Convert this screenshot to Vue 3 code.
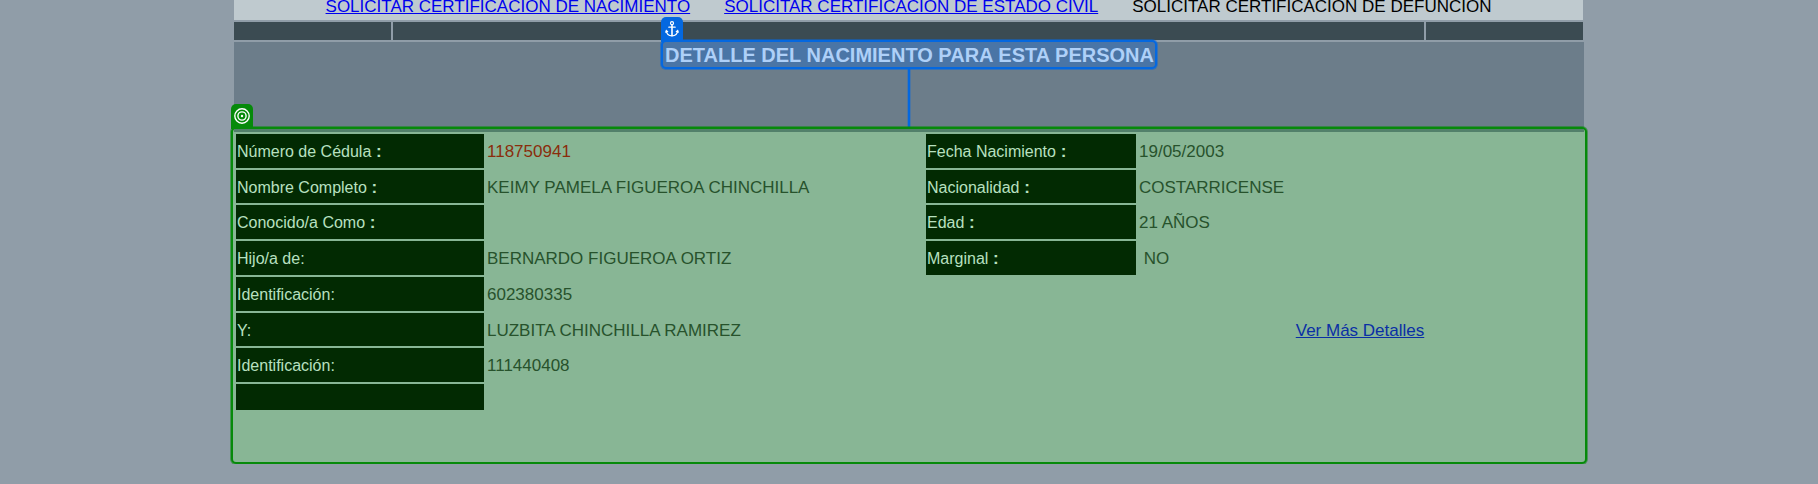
<script setup>
const people = [
  { label: 'Número de Cédula', colon: true, value: '118750941', accent: true, label2: 'Fecha Nacimiento', value2: '19/05/2003' },
  { label: 'Nombre Completo', colon: true, value: 'KEIMY PAMELA FIGUEROA CHINCHILLA', label2: 'Nacionalidad', value2: 'COSTARRICENSE' },
  { label: 'Conocido/a Como', colon: true, value: '', label2: 'Edad', value2: '21 AÑOS' },
  { label: 'Hijo/a de:', value: 'BERNARDO FIGUEROA ORTIZ', label2: 'Marginal', value2: '\u00a0NO' },
  { label: 'Identificación:', value: '602380335' },
  { label: 'Y:', value: 'LUZBITA CHINCHILLA RAMIREZ', link: 'Ver Más Detalles' },
  { label: 'Identificación:', value: '111440408' },
  { label: '', value: '' }
]
</script>

<template>
  <main class="page">
    <nav class="requests">
      <a href="#nacimiento">SOLICITAR CERTIFICACION DE NACIMIENTO</a>
      <a href="#estado-civil">SOLICITAR CERTIFICACION DE ESTADO CIVIL</a>
      <span>SOLICITAR CERTIFICACION DE DEFUNCION</span>
    </nav>
    <div class="bars"><i></i><i></i><i></i></div>
    <header class="band">
      <div class="anchor">
        <span class="tag tag-blue">
          <svg viewBox="0 0 16 16" width="16" height="16" fill="none" stroke="#fff" stroke-linecap="round">
            <circle cx="8" cy="2.2" r="1.5" stroke-width="1.2" />
            <path d="M8 4v10.6" stroke-width="1.6" />
            <path d="M4.800 6.200h6.400" stroke-width="1.200" />
            <path d="M2.300 9.800c.3 3 2.600 5 5.700 5.100 3.100-.1 5.400-2.100 5.700-5.100M1.700 11.200l.6-1.700 1.400 1.200M14.300 11.200l-.6-1.700-1.400 1.200" stroke-width="1.200" />
          </svg>
        </span>
        <h1>DETALLE DEL NACIMIENTO PARA ESTA PERSONA</h1>
      </div>
      <div class="connector"></div>
    </header>
    <section class="details">
      <span class="tag tag-green">
        <svg viewBox="0 0 16 16" width="16" height="16" fill="none" stroke="#fff">
          <circle cx="8" cy="8" r="7.200" stroke-width="1.400" />
          <circle cx="8" cy="8" r="4.100" stroke-width="1.400" />
          <circle cx="8" cy="8" r="1.200" fill="#fff" stroke="none" />
        </svg>
      </span>
      <table>
        <colgroup><col class="c1"><col class="c2"><col class="c3"><col></colgroup>
        <tbody>
          <tr v-for="(p, i) in people" :key="i">
            <th scope="row">{{ p.label }}<b v-if="p.colon"> :</b></th>
            <td :class="{ accent: p.accent }">{{ p.value }}</td>
            <th v-if="p.label2" scope="row">{{ p.label2 }}<b> :</b></th>
            <td v-else></td>
            <td v-if="p.link" class="more"><a href="#detalles">{{ p.link }}</a></td>
            <td v-else>{{ p.value2 }}</td>
          </tr>
        </tbody>
      </table>
    </section>
  </main>
</template>

<style>
body {
  background: #909da8;
}
</style>

<style scoped>
.page {
  max-width: 1350px;
  margin: 0 auto;
  font-family: "Liberation Sans", Arial, sans-serif;
  font-size: 17px;
}
.requests {
  display: flex;
  justify-content: center;
  gap: 34px;
  height: 20px;
  line-height: 14px;
  margin-right: 1px;
  overflow: hidden;
  white-space: nowrap;
  background: #bfcacf;
  color: #000;
}
.requests a {
  color: #0000ee;
}
.bars {
  display: grid;
  grid-template-columns: 157px 1fr 157px;
  gap: 2px;
  padding: 2px 1px 2px 0;
}
.bars i {
  height: 18px;
  background: #3b4b52;
}
.band {
  display: flex;
  flex-direction: column;
  align-items: center;
  min-height: 85px;
  background: #6c7d8a;
}
.anchor {
  position: relative;
  margin-top: -2px;
  border: 2px solid #0468e0;
  border-radius: 5px;
  background: #4a75a6;
  box-shadow: 0 0 0 1px rgba(4, 104, 224, 0.5);
}
h1 {
  margin: 0;
  padding: 1px 1px 0 2px;
  font-size: 20px;
  line-height: 24px;
  font-weight: bold;
  white-space: nowrap;
  color: #aed0f8;
}
.tag {
  position: absolute;
  left: -2px;
  bottom: 100%;
  box-sizing: border-box;
  display: flex;
  align-items: center;
  justify-content: center;
  width: 22px;
  height: 25px;
  padding-bottom: 2px;
  border-radius: 5px 5px 0 0;
}
.tag-blue {
  background: #0468e0;
}
.tag-green {
  background: #068a0a;
}
.connector {
  flex: 1;
  width: 2px;
  background: #0468e0;
  box-shadow: 0 0 0 1px rgba(4, 104, 224, 0.3);
}
.details {
  position: relative;
  margin: 0 -3px;
  padding: 0 1px 50px;
  border: 2px solid #068a0a;
  border-radius: 5px;
  background: #88b695;
  box-shadow: 0 0 0 1px rgba(6, 138, 10, 0.5);
}
table {
  width: 100%;
  table-layout: fixed;
  border-collapse: separate;
  border-spacing: 2px;
  border-top: 3px solid #52806a;
}
.c1 {
  width: 248px;
}
.c2 {
  width: 438px;
}
.c3 {
  width: 210px;
}
tr {
  height: 34px;
}
tr:nth-child(4n + 2) {
  height: 33px;
}
tr:last-child {
  height: 26px;
}
th,
td {
  padding: 2px 1px 0;
  line-height: 20px;
  text-align: left;
  font-weight: normal;
  color: #27522c;
}
th {
  font-size: 16px;
  background: #022a02;
  color: #b8e0c0;
}
th b {
  font-size: 17px;
}
.accent {
  color: #8a2d0c;
}
.more {
  text-align: center;
}
.more a {
  color: #0a2fa5;
}
</style>
